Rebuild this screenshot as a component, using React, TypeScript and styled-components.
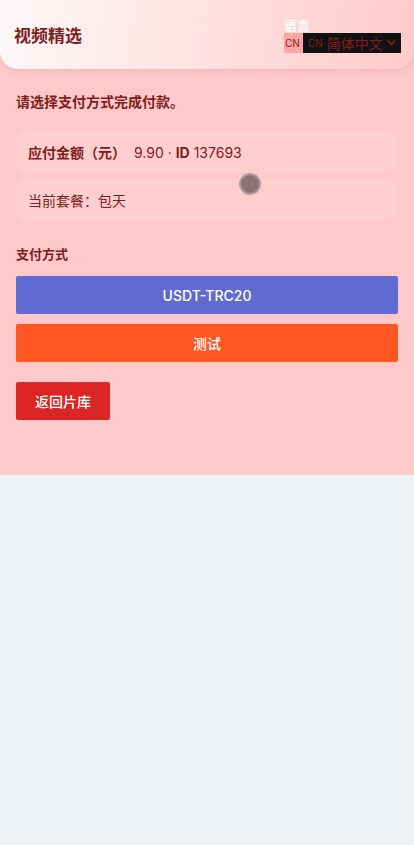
import React from 'react';
import styled, { createGlobalStyle } from 'styled-components';

const GlobalStyle = createGlobalStyle`
  html, body {
    margin: 0;
    padding: 0;
    background: #eef1f5;
    font-family: Inter, "Noto Sans CJK SC", sans-serif;
  }
  * { box-sizing: border-box; }
`;

const Page = styled.div`
  width: 414px;
  min-height: 845px;
  background: #eef1f5;
`;

const Main = styled.div`
  background: #ffc9c9;
  padding-bottom: 55px;
`;

const Header = styled.header`
  height: 69px;
  display: flex;
  align-items: center;
  justify-content: space-between;
  padding: 0 14px;
  background: linear-gradient(100deg, #fbf8f8 0%, #ffe3e3 45%, #ffcaca 100%);
  border-radius: 0 0 18px 18px;
  box-shadow: 0 2px 6px rgba(120, 60, 60, 0.12);
`;

const Title = styled.h1`
  margin: 0;
  font-size: 17px;
  font-weight: 700;
  color: #7f1d1d;
`;

const Lang = styled.div`
  display: flex;
  flex-direction: column;
  align-items: flex-start;
  margin-right: -1px;
`;

const LangLabel = styled.span`
  font-size: 13px;
  font-weight: 700;
  color: #ffffff;
  line-height: 16px;
`;

const LangRow = styled.div`
  display: flex;
  height: 20px;
`;

const FlagBox = styled.span`
  display: flex;
  align-items: center;
  width: 19px;
  background: #fca5a5;
  font-size: 10px;
  color: #8b1c1c;
  padding-left: 1px;
`;

const Select = styled.div`
  display: flex;
  align-items: center;
  gap: 3px;
  width: 98px;
  background: #111214;
  padding: 0 3px 0 5px;
  color: #8b1c1c;
  font-size: 14px;
  white-space: nowrap;
  overflow: hidden;
`;

const Code = styled.span`
  font-size: 10px;
  margin-right: 1px;
`;

const Body = styled.div`
  position: relative;
  padding: 22px 16px 0;
`;

const Lead = styled.p`
  margin: 0 0 20px;
  font-size: 14px;
  font-weight: 700;
  color: #7f1d1d;
`;

const InfoCard = styled.div`
  display: flex;
  align-items: center;
  gap: 8px;
  height: 42px;
  padding: 0 12px;
  margin-bottom: 6px;
  border-radius: 10px;
  background: #ffcfcf;
  font-size: 14px;
  color: #7f1d1d;
`;

const Strong = styled.b`
  font-weight: 700;
`;

const Section = styled.h2`
  margin: 23px 0 13px;
  font-size: 13px;
  font-weight: 700;
  color: #7f1d1d;
`;

const PayList = styled.div`
  display: flex;
  flex-direction: column;
  gap: 10px;
`;

const PayButton = styled.button<{ $bg: string }>`
  height: 38px;
  border: none;
  border-radius: 2px;
  background: ${p => p.$bg};
  color: #ffffff;
  font-family: inherit;
  font-size: 14px;
  font-weight: 500;
`;

const BackButton = styled.button`
  margin-top: 20px;
  height: 38px;
  width: 94px;
  border: none;
  border-radius: 2px;
  background: #dc2626;
  color: #ffffff;
  font-family: inherit;
  font-size: 14px;
  font-weight: 500;
`;

const Touch = styled.div`
  position: absolute;
  left: 239px;
  top: 104px;
  width: 22px;
  height: 22px;
  border-radius: 50%;
  background: #8c7476;
  border: 2px solid #b49a9c;
`;

function Chevron() {
  return (
    <svg width="11" height="11" viewBox="0 0 24 24" fill="none" stroke="#8b1c1c" strokeWidth="4" strokeLinecap="round" strokeLinejoin="round">
      <path d="M5 9l7 7 7-7" />
    </svg>
  );
}

export default function App() {
  return (
    <Page>
      <GlobalStyle />
      <Main>
        <Header>
          <Title>视频精选</Title>
          <Lang>
            <LangLabel>语言</LangLabel>
            <LangRow>
              <FlagBox>CN</FlagBox>
              <Select>
                <Code>CN</Code>
                <span>简体中文</span>
                <Chevron />
              </Select>
            </LangRow>
          </Lang>
        </Header>
        <Body>
          <Lead>请选择支付方式完成付款。</Lead>
          <InfoCard>
            <Strong>应付金额（元）</Strong>
            <span>9.90 · <Strong>ID</Strong> 137693</span>
          </InfoCard>
          <InfoCard>当前套餐：包天</InfoCard>
          <Section>支付方式</Section>
          <PayList>
            <PayButton $bg="#5f6bd1">USDT-TRC20</PayButton>
            <PayButton $bg="#ff5722">测试</PayButton>
          </PayList>
          <BackButton>返回片库</BackButton>
          <Touch />
        </Body>
      </Main>
    </Page>
  );
}
